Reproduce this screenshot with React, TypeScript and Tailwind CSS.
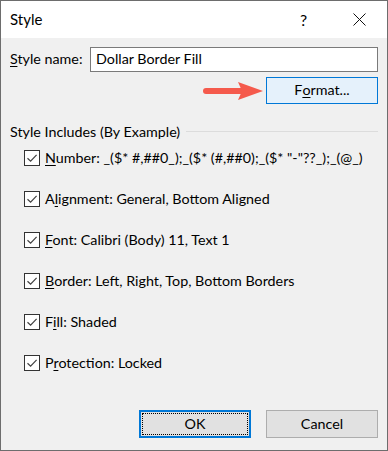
import React from 'react';

const FONT = "font-['Lato',_'Liberation_Sans',_sans-serif]";

type Item = { pre: string; key: string; post: string };

const ITEMS: Item[] = [
	{ pre: '', key: 'N', post: 'umber: _($* #,##0_);_($* (#,##0);_($* "-"??_);_(@_)' },
	{ pre: 'A', key: 'l', post: 'ignment: General, Bottom Aligned' },
	{ pre: '', key: 'F', post: 'ont: Calibri (Body) 11, Text 1' },
	{ pre: '', key: 'B', post: 'order: Left, Right, Top, Bottom Borders' },
	{ pre: 'F', key: 'i', post: 'll: Shaded' },
	{ pre: 'P', key: 'r', post: 'otection: Locked' },
];

const CheckRow = ({ item }: { item: Item }) => (
	<label className="flex items-center h-[20px]">
		<span className="w-[16px] h-[16px] border border-[#333333] bg-white flex items-center justify-center shrink-0">
			<svg width="12" height="12" viewBox="0 0 12 12" fill="none">
				<path d="M1.5 6.2 L4.6 9.2 L10.6 2.8" stroke="#404040" strokeWidth="1.2" />
			</svg>
		</span>
		<span className="ml-[5px] whitespace-nowrap">
			{item.pre}
			<span className="underline underline-offset-2">{item.key}</span>
			{item.post}
		</span>
	</label>
);

export default function App() {
	return (
		<div
			className={`${FONT} w-[388px] h-[451px] bg-[#f0f0f0] border border-[#6d6d6d] text-[14.3px] text-black flex flex-col leading-none`}
		>
			{/* title bar */}
			<div className="h-[37px] bg-white flex items-center pl-[9px] pr-[21px] shrink-0">
				<span className="text-[15px] flex-1">Style</span>
				<span className="text-[16px] w-[12px] mr-[41px]">?</span>
				<svg width="13" height="13" viewBox="0 0 13 13">
					<path d="M0.5 0.5 L12.5 12.5 M12.5 0.5 L0.5 12.5" stroke="#111" strokeWidth="1" />
				</svg>
			</div>

			<div className="flex flex-col pl-[9px] pr-[9px]">
				<div className="flex items-center mt-[9px] h-[25px]">
					<span className="w-[80px] whitespace-nowrap">
						<span className="underline underline-offset-2">S</span>tyle name:
					</span>
					<div className="w-[288px] h-[25px] bg-white border border-[#7a7a7a] flex items-center pl-[5px]">
						Dollar Border Fill
					</div>
				</div>

				<div className="flex items-center justify-end mt-[5px]">
					<svg width="62" height="20" viewBox="0 0 62 20" className="mr-[1px]">
						<path d="M3 10 L42 10" stroke="#f55a4c" strokeWidth="6" strokeLinecap="round" />
						<path d="M35 1 L60 10 L35 19 L39 10 Z" fill="#f55a4c" />
					</svg>
					<button className="w-[112px] h-[27px] bg-[#e5f1fb] border border-[#0078d7] flex items-center justify-center">
						F<span className="underline underline-offset-2">o</span>rmat...
					</button>
				</div>

				<div className="flex items-center mt-[21px]">
					<span className="whitespace-nowrap">Style Includes (By Example)</span>
					<div className="flex-1 h-px bg-[#dcdcdc] ml-[6px] -mt-[2px]" />
				</div>

				<div className="flex flex-col gap-[21px] pl-[14px] mt-[9px]">
					{ITEMS.map((it, i) => (
						<CheckRow key={i} item={it} />
					))}
				</div>

				<div className="flex justify-end gap-[15px] mt-[37px]">
					<button className="w-[112px] h-[28px] bg-[#e1e1e1] border-2 border-[#0078d7] p-[1px]">
						<span className="w-full h-full border border-dotted border-black flex items-center justify-center">
							OK
						</span>
					</button>
					<button className="w-[112px] h-[28px] bg-[#e1e1e1] border border-[#adadad] flex items-center justify-center">
						Cancel
					</button>
				</div>
			</div>
		</div>
	);
}
